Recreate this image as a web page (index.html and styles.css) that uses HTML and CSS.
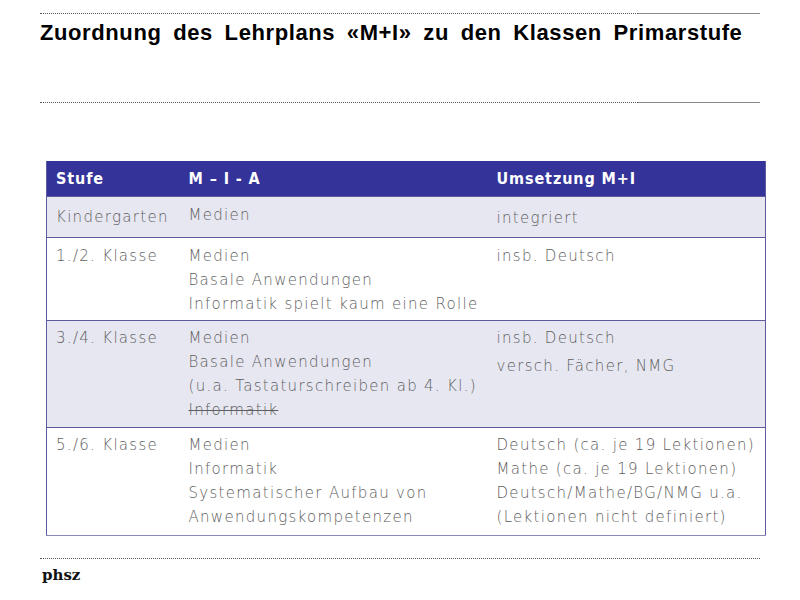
FILE: index.html
```html
<!DOCTYPE html>
<html lang="de">
<head>
<meta charset="utf-8">
<title>Zuordnung des Lehrplans</title>
<link rel="stylesheet" href="styles.css">
</head>
<body>
<div class="page">
  <div class="rule"><span class="dots"></span><span class="solid"></span></div>
  <h1 class="title">Zuordnung des Lehrplans «M+I» zu den Klassen&nbsp;Primarstufe</h1>
  <div class="rule rule-mid"><span class="dots"></span><span class="solid"></span></div>
  <table class="grid">
    <colgroup>
      <col class="w1">
      <col class="w2">
      <col class="w3">
    </colgroup>
    <thead>
      <tr>
        <th class="c1">Stufe</th>
        <th class="c2">M – I - A</th>
        <th class="c3">Umsetzung M+I</th>
      </tr>
    </thead>
    <tbody>
      <tr class="alt r1">
        <td class="c1"><span class="kg">Kindergarten</span></td>
        <td class="c2"><span class="up">Medien</span></td>
        <td class="c3"><span class="down">integriert</span></td>
      </tr>
      <tr class="r2">
        <td class="c1">1./2. Klasse</td>
        <td class="c2">Medien<br>Basale Anwendungen<br>Informatik spielt kaum eine Rolle</td>
        <td class="c3">insb. Deutsch</td>
      </tr>
      <tr class="alt r3">
        <td class="c1">3./4. Klasse</td>
        <td class="c2">Medien<br>Basale Anwendungen<br>(u.a. Tastaturschreiben ab 4. Kl.)<br><s>Informatik</s></td>
        <td class="c3"><p class="para">insb. Deutsch</p><p class="para">versch. Fächer, NMG</p></td>
      </tr>
      <tr class="r4">
        <td class="c1">5./6. Klasse</td>
        <td class="c2">Medien<br>Informatik<br>Systematischer Aufbau von<br>Anwendungskompetenzen</td>
        <td class="c3">Deutsch (ca. je 19 Lektionen)<br>Mathe (ca. je 19 Lektionen)<br>Deutsch/Mathe/BG/NMG u.a.<br>(Lektionen nicht definiert)</td>
      </tr>
    </tbody>
  </table>
  <div class="rule rule-bottom"><span class="dots"></span></div>
  <div class="logo">phsz</div>
</div>
</body>
</html>
```

FILE: styles.css
```css
html, body {
  margin: 0;
  padding: 0;
  background: #ffffff;
}
.page {
  width: 800px;
  height: 600px;
  padding: 13px 40px 0 40px;
  box-sizing: border-box;
}
.rule {
  display: flex;
  align-items: flex-start;
  height: 1px;
}
.dots {
  flex: 1;
  height: 0;
  border-top: 1px dotted #555;
}
.solid {
  width: 122px;
  height: 0;
  border-top: 1px solid #8a8a8a;
}
.title {
  margin: 6px 0 0 0;
  font-family: "Liberation Sans", Arial, sans-serif;
  font-weight: bold;
  font-size: 22px;
  line-height: 25px;
  color: #000;
  letter-spacing: 0.6px;
  word-spacing: 5px;
  white-space: nowrap;
}
.rule-mid {
  margin-top: 57px;
}
.grid {
  margin: 58px 0 0 6px;
  width: 720px;
  table-layout: fixed;
  border-collapse: collapse;
  border-left: 1px solid #5b5b9e;
  border-right: 1px solid #5b5b9e;
  font-family: "DejaVu Sans", sans-serif;
  font-weight: 200;
  font-size: 15px;
  color: #5e5e5e;
  letter-spacing: 1.3px;
}
.w1 { width: 137px; }
.w2 { width: 308px; }
.grid th {
  background: #333399;
  color: #ffffff;
  font-family: "DejaVu Sans Condensed", "DejaVu Sans", sans-serif;
  font-weight: bold;
  font-size: 16px;
  letter-spacing: 0.9px;
  text-align: left;
  height: 35px;
  padding: 0;
  vertical-align: middle;
}
.grid td {
  padding: 0;
  vertical-align: top;
  line-height: 24px;
  border-top: 1px solid #5b5b9e;
  white-space: nowrap;
}
.grid tbody tr:last-child td {
  border-bottom: 1px solid #8888b8;
}
.c1 { padding-left: 9px !important; }
.c2 { padding-left: 5px !important; }
.c3 { padding-left: 5px !important; }
.alt td { background: #e7e7f1; }
.r1 td { height: 34px; padding-top: 6px !important; }
.r2 td { height: 76px; padding-top: 6px !important; }
.r3 td { height: 101px; padding-top: 5px !important; }
.r4 td { height: 102px; padding-top: 5px !important; }
.kg { display: inline-block; padding-top: 2px; }
.up { display: inline-block; margin-top: -3px; }
.down { display: inline-block; padding-top: 3px; }
.para { margin: 0 0 4px 0; }
s { text-decoration-thickness: 1px; }
.rule-bottom {
  margin-top: 22px;
}
.logo {
  margin: 7px 0 0 2px;
  font-family: "DejaVu Serif", serif;
  font-weight: bold;
  font-size: 15px;
  line-height: 18px;
  color: #111;
}
```
